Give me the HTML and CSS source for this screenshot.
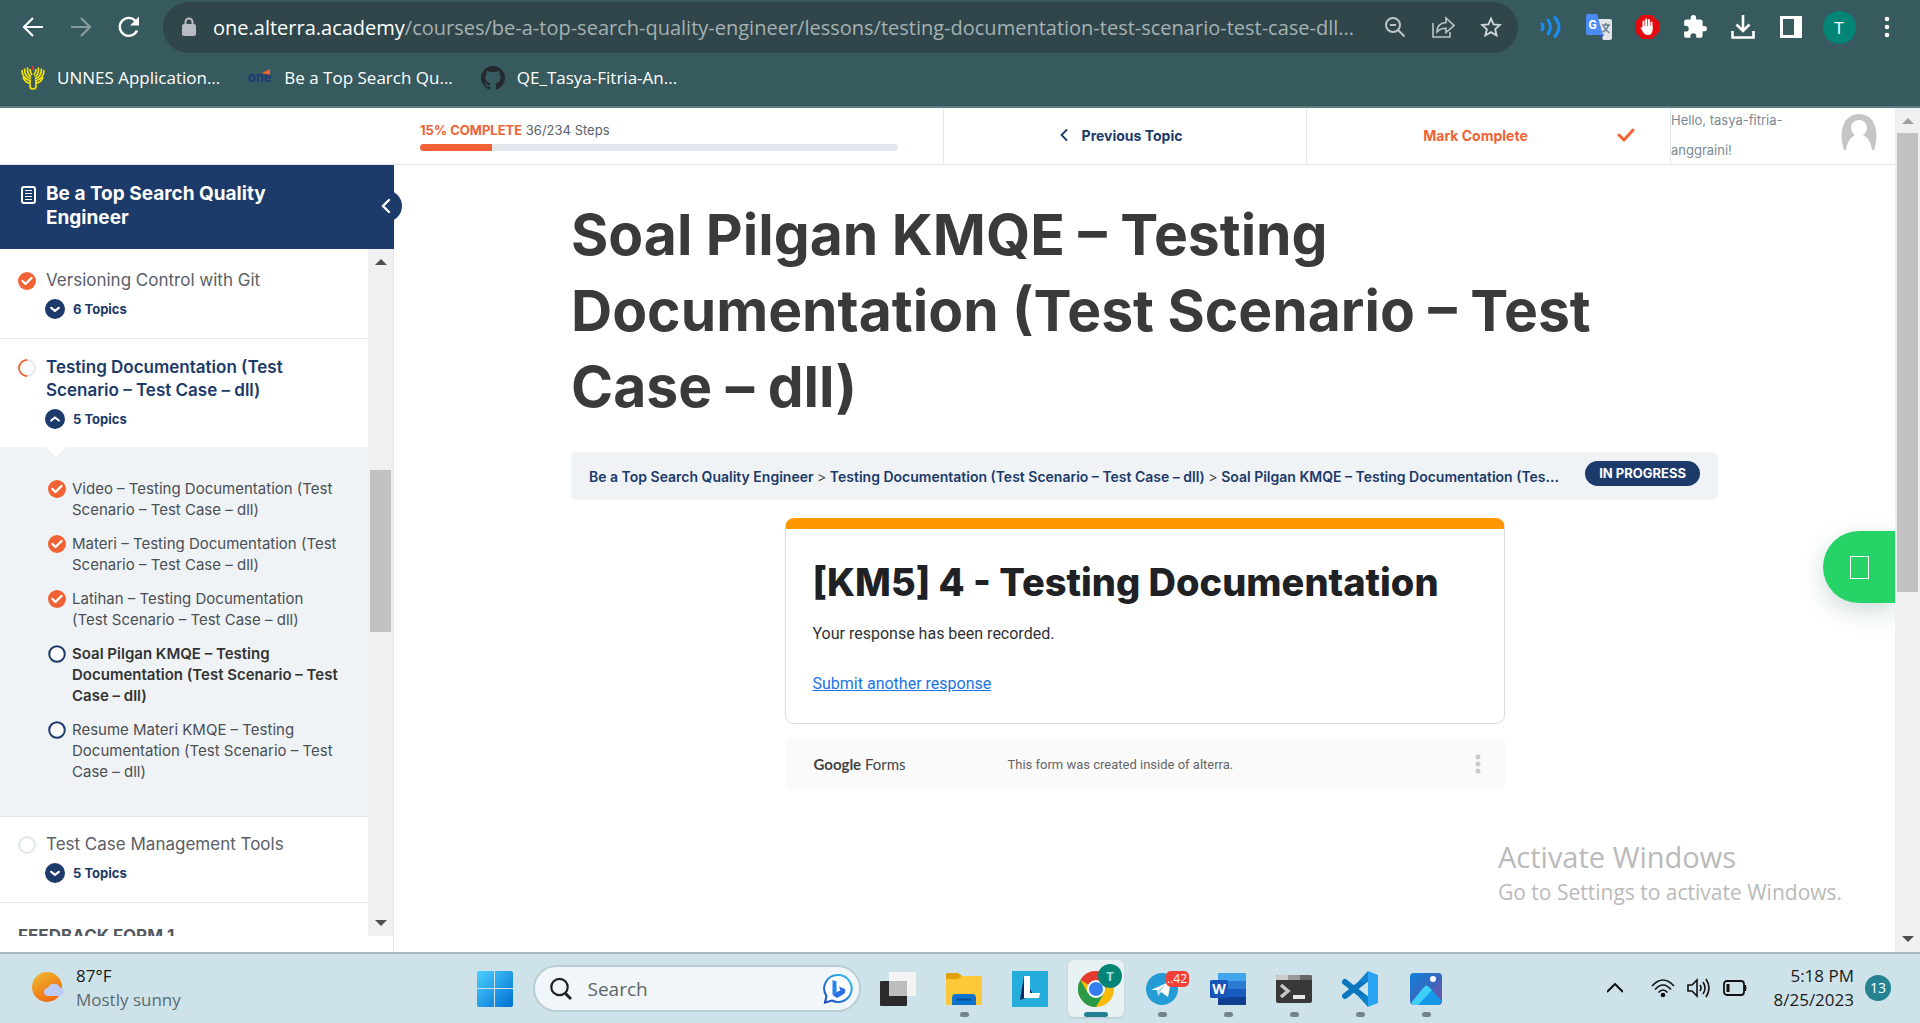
FILE: index.html
```html
<!DOCTYPE html>
<html lang="en">
<head>
<meta charset="utf-8">
<title>Soal Pilgan KMQE – Testing Documentation</title>
<link rel="stylesheet" href="styles.css">
</head>
<body>
<svg class="defs" aria-hidden="true">
  <symbol id="done" viewBox="0 0 18 18"><circle cx="9" cy="9" r="9" fill="#f16334"/><path d="M4.500 9l3 3 6-6" fill="none" stroke="#fff" stroke-width="2.400" stroke-linecap="round" stroke-linejoin="round"/></symbol>
  <symbol id="open" viewBox="0 0 18 18"><circle cx="9" cy="9" r="7.800" fill="#fff" stroke="#1c3a6a" stroke-width="2"/></symbol>
  <symbol id="down" viewBox="0 0 20 20"><circle cx="10" cy="10" r="10" fill="#1c3a6a"/><path d="M6.200 8.800l3.800 3 3.800-3" fill="none" stroke="#fff" stroke-width="2.200" stroke-linecap="round" stroke-linejoin="round"/></symbol>
  <symbol id="up" viewBox="0 0 20 20"><circle cx="10" cy="10" r="10" fill="#1c3a6a"/><path d="M6.200 11.500l3.800-3 3.800 3" fill="none" stroke="#fff" stroke-width="2.200" stroke-linecap="round" stroke-linejoin="round"/></symbol>
</svg>

<header class="browser">
  <div class="toolbar">
    <button class="tool" aria-label="Back"><svg width="24" height="24" viewBox="0 0 24 24" fill="none" stroke="#fff" stroke-width="2.200"><path d="M22 12H4M12 3l-9 9 9 9"/></svg></button>
    <button class="tool" aria-label="Forward"><svg width="24" height="24" viewBox="0 0 24 24" fill="none" stroke="#889c9e" stroke-width="2.200"><path d="M2 12h18M12 3l9 9-9 9"/></svg></button>
    <button class="tool" aria-label="Reload"><svg width="24" height="24" viewBox="0 0 24 24"><path d="M20 15.500A9 9 0 1 1 18.600 6" fill="none" stroke="#fff" stroke-width="2.400"/><path d="M22 1.500v9h-9z" fill="#fff"/></svg></button>
    <div class="omnibox">
      <svg class="lock" width="14" height="20" viewBox="0 0 14 20"><rect y="7" width="14" height="12" rx="2" fill="#b9bcc2"/><path d="M3.500 8V5a3.500 3.500 0 0 1 7 0v3" fill="none" stroke="#b9bcc2" stroke-width="2"/></svg>
      <div class="url"><b>one.alterra.academy</b>/courses/be-a-top-search-quality-engineer/lessons/testing-documentation-test-scenario-test-case-dll...</div>
      <button class="tool" aria-label="Zoom"><svg width="22" height="22" viewBox="0 0 22 22" fill="none" stroke="#bcc4c6" stroke-width="2"><circle cx="9" cy="9" r="7"/><path d="M14 14l6.500 6.500M6 9h6"/></svg></button>
      <button class="tool" aria-label="Share"><svg width="24" height="24" viewBox="0 0 24 24" fill="none" stroke="#bcc4c6" stroke-width="1.600"><path d="M2 8v14h17v-5M6 17c0-6 3-9 9-9.500V3l8 7.500-8 7v-4.200c-4 0-6.500 1-9 3.700z"/></svg></button>
      <button class="tool" aria-label="Bookmark"><svg width="22" height="22" viewBox="0 0 24 24" fill="none" stroke="#d0d6d7" stroke-width="2"><path d="M12 2.800l2.800 6.400 6.900.6-5.200 4.600 1.600 6.800L12 17.600l-6.100 3.600 1.600-6.800L2.300 9.800l6.900-.6z"/></svg></button>
    </div>
    <button class="tool" aria-label="Sound"><svg width="22" height="24" viewBox="0 0 22 24" fill="none" stroke="#1a8cf5" stroke-width="3" stroke-linecap="round"><path d="M2 9q2 3 0 6M8 5q5 7 0 14M15 2.500q8 9.500 0 19"/></svg></button>
    <button class="tool" aria-label="Translate"><svg width="26" height="26" viewBox="0 0 26 26"><path d="M10 5h14q2 0 2 2v17q0 2-2 2h-7z" fill="#e2e4e6"/><path d="M14 20h4l-3 6z" fill="#3650c0"/><path d="M2 0h9l6 21H2q-2 0-2-2V2q0-2 2-2z" fill="#4c8bf5"/><path d="M16 11h8M20 9v2M22.500 11q-1.500 5-6 7M17.500 12q1.500 4 6 7" fill="none" stroke="#66808c" stroke-width="1.500"/><text x="2.500" y="15" class="glyph-g">G</text></svg></button>
    <button class="tool" aria-label="Ad blocker"><svg width="24" height="24" viewBox="0 0 24 24"><path d="M7 0h10l7 7v10l-7 7H7l-7-7V7z" fill="#e4090c"/><path d="M8.500 13V6.500M11.200 12V4.500M13.900 12V5M16.500 14V7.500" stroke="#fff" stroke-width="2" stroke-linecap="round"/><path d="M7.500 11h10v4c0 3-2 5-4.500 5s-4-1-5-3l-2.500-4q1-1.500 2.500.5z" fill="#fff"/></svg></button>
    <button class="tool" aria-label="Extensions"><svg width="26" height="26" viewBox="0 0 24 24"><path fill="#fff" d="M20.500 11H19V7a2 2 0 0 0-2-2h-4V3.500a2.500 2.500 0 0 0-5 0V5H4a2 2 0 0 0-2 2v3.800h1.500a2.700 2.700 0 0 1 0 5.400H2V20a2 2 0 0 0 2 2h3.800v-1.500a2.700 2.700 0 0 1 5.400 0V22H17a2 2 0 0 0 2-2v-4h1.500a2.500 2.500 0 0 0 0-5z"/></svg></button>
    <button class="tool" aria-label="Downloads"><svg width="24" height="24" viewBox="0 0 24 24" fill="none" stroke="#fff" stroke-width="2.600"><path d="M12 0v15M5.500 9.500l6.500 6.500 6.500-6.500M1.500 16v6.500h21V16"/></svg></button>
    <button class="tool" aria-label="Side panel"><svg width="22" height="22" viewBox="0 0 22 22"><path fill="#fff" fill-rule="evenodd" d="M0 0h22v22H0zM3 3v16h11V3z"/></svg></button>
    <button class="tool" aria-label="Profile"><span class="profile">T</span></button>
    <button class="tool" aria-label="Menu"><svg width="6" height="22" viewBox="0 0 6 22" fill="#fff"><circle cx="3" cy="3" r="2.300"/><circle cx="3" cy="11" r="2.300"/><circle cx="3" cy="19" r="2.300"/></svg></button>
  </div>
  <nav class="bookmarks">
    <a href="#"><svg width="24" height="24" viewBox="0 0 24 24" fill="none" stroke="#f2e205" stroke-width="1.700"><path d="M10 15Q1 13 1 4M10 13Q3.500 11 3.500 2.500M10 11Q6 8 6.500 1.500M11 9Q9 6 9 3M14 15q9-2 9-11M14 13q6.500-2 6.500-10.500M14 11q4-3 3.500-9.500M13 9q2-3 2-6M2 11q2 6 7 6M22 11q-2 6-7 6"/><path d="M9 15v5q0 3 3 3t3-3v-5"/><path d="M12 0v4" stroke="#e33"/></svg>UNNES Application...</a>
    <a href="#"><svg width="24" height="24" viewBox="0 0 24 24"><text x="0" y="16" class="glyph-one">one</text><path d="M14 7l8-4v6z" fill="#f16334"/></svg>Be a Top Search Qu...</a>
    <a href="#"><svg width="24" height="24" viewBox="0 0 16 16"><path fill="#24292e" d="M8 0C3.580 0 0 3.580 0 8c0 3.540 2.290 6.530 5.470 7.590.4.070.55-.17.55-.38 0-.19-.01-.82-.01-1.490-2.010.37-2.530-.49-2.690-.94-.09-.23-.48-.94-.82-1.130-.28-.15-.68-.52-.01-.53.63-.01 1.080.58 1.230.82.72 1.210 1.870.87 2.330.66.07-.52.28-.87.51-1.070-1.780-.2-3.640-.89-3.640-3.950 0-.87.31-1.590.82-2.150-.08-.2-.36-1.020.08-2.120 0 0 .67-.21 2.200.82.64-.18 1.320-.27 2-.27s1.360.09 2 .27c1.530-1.040 2.200-.82 2.200-.82.44 1.100.16 1.920.08 2.120.51.56.82 1.270.82 2.150 0 3.070-1.870 3.750-3.650 3.950.29.25.54.73.54 1.480 0 1.070-.01 1.930-.01 2.200 0 .21.15.46.55.38A8.010 8.010 0 0 0 16 8c0-4.420-3.580-8-8-8z"/></svg>QE_Tasya-Fitria-An...</a>
  </nav>
</header>

<div class="page">
  <div class="site">
    <div class="topbar">
      <div class="progress">
        <div class="progress-text"><b>15% COMPLETE</b> 36/234 Steps</div>
        <div class="track"><div class="fill" style="width:15%"></div></div>
      </div>
      <a class="prev" href="#"><svg width="8" height="12" viewBox="0 0 8 12" fill="none" stroke="#1c3a6a" stroke-width="1.800" stroke-linecap="round"><path d="M6.500 1l-5 5 5 5"/></svg>Previous Topic</a>
      <button class="mark">Mark Complete<svg width="18" height="14" viewBox="0 0 18 14" fill="none" stroke="#f16334" stroke-width="3" stroke-linecap="round" stroke-linejoin="round"><path d="M2 7l5 5 9-10"/></svg></button>
      <div class="user"><span>Hello, tasya-fitria-<br>anggraini!</span>
        <svg width="36" height="36" viewBox="0 0 36 36"><path d="M3 36C-3 18 2 0 18 0s21 18 15 36z" fill="#c5c5c5"/><circle cx="18" cy="14" r="8" fill="#fff"/><path d="M5 36c1-8 5-14 10-15h6c5 1 9 7 10 15z" fill="#fff"/></svg>
      </div>
    </div>
    <div class="columns">
      <aside class="sidebar">
        <div class="course">
          <svg width="15" height="18" viewBox="0 0 15 18" fill="none" stroke="#fff"><rect x="1" y="1" width="13" height="16" rx="2" stroke-width="2"/><path d="M4 4.500h7M4 7.500h7M4 10.500h7M4 13.500h7"/></svg>
          <h2>Be a Top Search Quality<br>Engineer</h2>
          <button class="collapse" aria-label="Collapse sidebar"><svg width="10" height="16" viewBox="0 0 10 16" fill="none" stroke="#fff" stroke-width="2.400" stroke-linecap="round"><path d="M8 2L2 8l6 6"/></svg></button>
        </div>
        <div class="outline">
          <div class="lessons">
            <section class="lesson">
              <svg class="status" width="18" height="18"><use href="#done"/></svg>
              <div><a href="#">Versioning Control with Git</a><button class="topics"><svg width="20" height="20"><use href="#down"/></svg>6 Topics</button></div>
            </section>
            <section class="lesson current">
              <svg class="status" width="18" height="18" viewBox="0 0 18 18" fill="none" stroke-width="1.800"><circle cx="9" cy="9" r="8" stroke="#e2e7ed"/><path d="M9 1a8 8 0 0 0 0 16" stroke="#f16334"/></svg>
              <div><a href="#">Testing Documentation (Test<br>Scenario – Test Case – dll)</a><button class="topics"><svg width="20" height="20"><use href="#up"/></svg>5 Topics</button></div>
            </section>
            <ul class="subs">
              <li><svg width="18" height="18"><use href="#done"/></svg><a href="#">Video – Testing Documentation (Test<br>Scenario – Test Case – dll)</a></li>
              <li><svg width="18" height="18"><use href="#done"/></svg><a href="#">Materi – Testing Documentation (Test<br>Scenario – Test Case – dll)</a></li>
              <li><svg width="18" height="18"><use href="#done"/></svg><a href="#">Latihan – Testing Documentation<br>(Test Scenario – Test Case – dll)</a></li>
              <li class="here"><svg width="18" height="18"><use href="#open"/></svg><a href="#">Soal Pilgan KMQE – Testing<br>Documentation (Test Scenario – Test<br>Case – dll)</a></li>
              <li><svg width="18" height="18"><use href="#open"/></svg><a href="#">Resume Materi KMQE – Testing<br>Documentation (Test Scenario – Test<br>Case – dll)</a></li>
            </ul>
            <section class="lesson upcoming">
              <svg class="status" width="18" height="18" viewBox="0 0 18 18"><circle cx="9" cy="9" r="8" fill="#fff" stroke="#e2e7ed" stroke-width="2"/></svg>
              <div><a href="#">Test Case Management Tools</a><button class="topics"><svg width="20" height="20"><use href="#down"/></svg>5 Topics</button></div>
            </section>
            <h3 class="section-title">FEEDBACK FORM 1</h3>
          </div>
          <div class="scrollbar inner"><i class="arrow-up"></i><div class="rail"><div class="thumb"></div></div><i class="arrow-down"></i></div>
        </div>
      </aside>
      <main>
        <h1>Soal Pilgan KMQE – Testing<br>Documentation (Test Scenario – Test<br>Case – dll)</h1>
        <nav class="crumbs">
          <div class="trail"><a href="#">Be a Top Search Quality Engineer</a> <i>&gt;</i> <a href="#">Testing Documentation (Test Scenario – Test Case – dll)</a> <i>&gt;</i> <a href="#">Soal Pilgan KMQE – Testing Documentation (Tes...</a></div>
          <span class="badge">IN PROGRESS</span>
        </nav>
        <article class="form-card">
          <h2>[KM5] 4 - Testing Documentation</h2>
          <p>Your response has been recorded.</p>
          <a href="#">Submit another response</a>
        </article>
        <footer class="form-foot">
          <span class="gforms"><b>Google</b> Forms</span>
          <span class="made">This form was created inside of alterra.</span>
          <svg width="6" height="20" viewBox="0 0 6 20" fill="#ccc"><circle cx="3" cy="3" r="2.500"/><circle cx="3" cy="10" r="2.500"/><circle cx="3" cy="17" r="2.500"/></svg>
        </footer>
      </main>
    </div>
    <button class="whatsapp" aria-label="WhatsApp"><i></i></button>
    <div class="activate"><strong>Activate Windows</strong><span>Go to Settings to activate Windows.</span></div>
  </div>
  <div class="scrollbar outer"><i class="arrow-up"></i><div class="rail"><div class="thumb"></div></div><i class="arrow-down"></i></div>
</div>

<footer class="taskbar">
  <div class="weather">
    <svg width="34" height="32" viewBox="0 0 34 32"><defs><linearGradient id="sun" x1="0" y1="0" x2=".6" y2="1"><stop offset="0" stop-color="#ecbd35"/><stop offset="1" stop-color="#f26a0c"/></linearGradient></defs><circle cx="15" cy="15" r="15" fill="url(#sun)"/><path d="M16 24a4 4 0 0 1 0-8 6.500 6.500 0 0 1 12-.5 4.500 4.500 0 0 1 1 8.500z" fill="#bccbf5"/></svg>
    <div><span>87°F</span><span class="muted">Mostly sunny</span></div>
  </div>
  <div class="apps">
    <button class="app" aria-label="Start"><svg width="36" height="36" viewBox="0 0 36 36"><defs><linearGradient id="win" x1="0" y1="0" x2="1" y2="1"><stop offset="0" stop-color="#4cd0ff"/><stop offset="1" stop-color="#006fd0"/></linearGradient></defs><path fill="url(#win)" d="M2 0h15v17H0V2q0-2 2-2zM18 0h16q2 0 2 2v15H18zM0 18h17v18H2q-2 0-2-2zM18 18h18v16q0 2-2 2H18z"/></svg></button>
    <label class="search">
      <svg width="22" height="24" viewBox="0 0 22 24" fill="none" stroke="#222" stroke-width="2.200"><circle cx="9.500" cy="10" r="8.200"/><path d="M15 16l6 6" stroke-width="3"/></svg>
      <input type="text" placeholder="Search" aria-label="Search">
      <svg width="30" height="32" viewBox="0 0 30 32"><defs><linearGradient id="bing" x1="1" y1="0" x2="0" y2="1"><stop offset="0" stop-color="#35c5f2"/><stop offset="1" stop-color="#1546c0"/></linearGradient></defs><path d="M15 2a13.500 13.500 0 1 1-6 25.500l-7 2 1.500-6.500A13.500 13.500 0 0 1 15 2z" fill="#fff" stroke="url(#bing)" stroke-width="2"/><path d="M9.500 7l4 1.500v10.500l-4 3z" fill="#1f86ee"/><path d="M9.500 22l4-3 4-1.500-1.500-4 6 2.500q1 4-2 5.500l-6 3.500z" fill="#2a6fe6"/></svg>
    </label>
    <button class="app" aria-label="Task view"><svg width="36" height="34" viewBox="0 0 36 34"><rect y="9" width="27" height="25" rx="1" fill="#2b2b2b"/><rect x="9" width="27" height="24" rx="1" fill="#f4f4f4"/><path d="M9 9h18v15H9z" fill="#bdbdbd"/></svg></button>
    <button class="app" aria-label="File Explorer"><svg width="36" height="34" viewBox="0 0 36 34"><path d="M1 1h11l4 3-3 4H0V2z" fill="#e0a008"/><path d="M0 7h12l4-3h20v29H0z" fill="#fdc93a"/><path d="M6 33v-7q0-4 4-4h16q4 0 4 4v7z" fill="#0b73cc"/><path d="M11 27.500h14" stroke="#064f94" stroke-width="2"/></svg><i class="dot"></i></button>
    <button class="app" aria-label="L"><svg width="36" height="36" viewBox="0 0 36 36"><path d="M0 0h36v36H0z" fill="#25aedb"/><path d="M12 5L8 29l8-3 6 0z" fill="#0b2a5c"/><path d="M12 5h6v17h10l-1 5H12z" fill="#fff"/></svg></button>
    <button class="app active" aria-label="Chrome"><svg width="46" height="46" viewBox="0 0 46 46"><circle cx="18" cy="28" r="18" fill="#f9bb07"/><path d="M18 28L2.400 19a18 18 0 0 1 31.200 0z" fill="#e33b2e"/><path d="M2.400 19A18 18 0 0 0 18 46l7.800-13.500L18 28 10.200 32.500z" fill="#2a9a48"/><circle cx="18" cy="28" r="9" fill="#fff"/><circle cx="18" cy="28" r="7" fill="#347ef0"/><circle cx="32" cy="15" r="12" fill="#028577"/><text x="32" y="20" class="glyph-t">T</text></svg><i class="dot"></i></button>
    <button class="app" aria-label="Telegram"><svg width="32" height="32" viewBox="0 0 32 32"><circle cx="16" cy="16" r="16" fill="#259bd6"/><path d="M5 17L25 8l-3 16-7-5-3 4-1-6z" fill="#fff"/><path d="M12 17l8-6-6 8-2 4z" fill="#b7d8ea"/></svg><span class="count">..42</span><i class="dot"></i></button>
    <button class="app" aria-label="Word"><svg width="36" height="34" viewBox="0 0 36 34"><path d="M8 1h28v8H8z" fill="#41a5ee"/><path d="M8 9h28v8H8z" fill="#2b7cd3"/><path d="M8 17h28v8H8z" fill="#185abd"/><path d="M8 25h28v8H8z" fill="#103f91"/><rect y="8" width="18" height="18" rx="1.500" fill="#1955b8"/><text x="9" y="22" class="glyph-w">W</text></svg><i class="dot"></i></button>
    <button class="app" aria-label="Terminal"><svg width="36" height="28" viewBox="0 0 36 28"><rect width="36" height="28" rx="2" fill="#383838"/><path d="M0 5V2q0-2 2-2h10v5z" fill="#ccc"/><path d="M12 0h12v5H12z" fill="#999"/><path d="M24 0h10q2 0 2 2v3H24z" fill="#666"/><path d="M5 10l7 6-7 6" fill="none" stroke="#c8c8c8" stroke-width="3.500"/><path d="M17 20h12v4H17z" fill="#e8e8e8"/></svg><i class="dot"></i></button>
    <button class="app" aria-label="Visual Studio Code"><svg width="36" height="36" viewBox="0 0 36 36"><path d="M3 11l24 19M3 25L27 6" stroke="#0a76be" stroke-width="6" stroke-linecap="round"/><path d="M26 0l10 4v28l-10 4z" fill="#28a4f2"/><path d="M26 0L16 11l10 0M26 36L16 25l10 0" fill="#0f82cc"/></svg><i class="dot"></i></button>
    <button class="app" aria-label="Photos"><svg width="32" height="32" viewBox="0 0 32 32"><defs><linearGradient id="ph" x1="0" y1="0" x2="1" y2="1"><stop offset="0" stop-color="#0f80dd"/><stop offset=".5" stop-color="#3868bd"/><stop offset="1" stop-color="#8152a5"/></linearGradient></defs><rect width="32" height="32" rx="4" fill="url(#ph)"/><path d="M1 30L14 14q2.500-3 5 0l12 13v1q0 4-4 4H4q-2 0-3-2z" fill="#1698e8"/><path d="M1 30L14 14q2.500-3 5 0l3 3L8 32H4q-2 0-3-2z" fill="#3ed0fa"/><circle cx="23" cy="6" r="3" fill="#fff"/></svg><i class="dot"></i></button>
  </div>
  <div class="tray">
    <svg width="16" height="10" viewBox="0 0 16 10" fill="none" stroke="#111" stroke-width="2"><path d="M0 9l8-8 8 8"/></svg>
    <div class="tray-icons">
      <svg width="24" height="20" viewBox="0 0 24 20" fill="none" stroke="#111" stroke-width="1.600"><path d="M1 8q11-12 22 0M4 11.500q8-9 16 0M7.500 14.500q4.500-5 9 0"/><circle cx="12" cy="17" r="1.500" fill="#111"/></svg>
      <svg width="24" height="20" viewBox="0 0 24 20" fill="none" stroke="#111" stroke-width="1.600"><path d="M1 7v6h4l5 5V2L5 7zM13 7q2 3 0 6M16 4q4 6 0 12M19 1q6 9 0 18"/></svg>
      <svg width="24" height="16" viewBox="0 0 24 16"><rect x="1" y="1" width="20" height="14" rx="3" fill="none" stroke="#111" stroke-width="1.800"/><path d="M3.500 4h3v8h-3zM21 5h2q1 3 0 6h-2z" fill="#111"/></svg>
    </div>
    <div class="clock"><span>5:18 PM</span><span>8/25/2023</span></div>
    <span class="notif">13</span>
  </div>
</footer>
</body>
</html>
```
FILE: styles.css
```css
* { box-sizing: border-box; }
body { margin: 0; height: 100vh; display: flex; flex-direction: column; overflow: hidden; background: #fff; font-family: Inter, "Noto Sans", sans-serif; color: #3c3c3c; }
button { border: 0; padding: 0; background: none; font: inherit; color: inherit; }
a { color: inherit; text-decoration: none; }
h1, h2, h3, p, ul { margin: 0; padding: 0; }
svg { flex: none; display: block; }
.defs { position: absolute; width: 0; height: 0; }

/* browser chrome */
.browser { flex: none; height: 108px; background: #375a5e; border-bottom: 2px solid #5d7f82; font-family: "Open Sans", "Noto Sans", sans-serif; }
.toolbar { display: flex; align-items: center; padding: 1px 9px 0; }
.tool { width: 48px; height: 52px; display: flex; align-items: center; justify-content: center; }
.omnibox { flex: 1; min-width: 0; height: 51px; margin: 0 9px 0 10px; border-radius: 26px; background: #30464a; display: flex; align-items: center; padding: 0 3px 0 19px; }
.url { flex: 1; min-width: 0; margin-left: 17px; font-size: 20px; color: #a5b1b3; white-space: nowrap; overflow: hidden; }
.url b { font-weight: 400; color: #fff; }
.profile { width: 33px; height: 33px; border-radius: 50%; background: #028577; color: #fff; font-size: 17px; line-height: 33px; }
.glyph-g { font: bold 12px Roboto, sans-serif; fill: #fff; }
.glyph-one { font: bold 13px Inter, sans-serif; fill: #1c3a7a; }
.bookmarks { display: flex; gap: 28px; padding: 13px 21px 0; color: #fff; font-size: 17px; line-height: 24px; }
.bookmarks a { display: flex; align-items: center; gap: 12px; white-space: nowrap; }

/* page */
.page { flex: 1; min-height: 0; display: flex; }
.site { flex: 1; min-width: 0; position: relative; display: flex; flex-direction: column; }
.topbar { flex: none; height: 57px; border-bottom: 1px solid #e2e7ed; display: flex; padding-left: 394px; }
.progress { flex: 1; padding: 12px 45px 0 26px; font-size: 13px; color: #5a5f69; }
.progress-text { line-height: 20px; margin-bottom: 4px; }
.progress b { color: #f16334; font-weight: 700; }
.track { height: 7px; border-radius: 4px; background: #e2e7ed; overflow: hidden; }
.fill { height: 7px; background: #f16334; }
.prev, .mark { border-left: 1px solid #e2e7ed; padding-bottom: 2px; font-size: 14px; font-weight: 700; display: flex; align-items: center; justify-content: center; }
.prev { width: 363px; gap: 14px; color: #1c3a6a; padding-right: 8px; }
.mark { width: 364px; color: #f16334; display: grid; grid-template-columns: 1fr auto 1fr; padding-right: 26px; }
.mark::before { content: ""; }
.mark svg { justify-self: end; margin-right: 9px; }
.user { width: 225px; border-left: 1px solid #e2e7ed; display: flex; justify-content: space-between; padding: 0 18px 0 0; font-size: 13px; line-height: 30px; color: #7b8a93; }
.user span { margin-top: -3px; white-space: nowrap; }
.user svg { margin-top: 6px; }
.columns { flex: 1; min-height: 0; display: flex; }

/* sidebar */
.sidebar { width: 394px; flex: none; display: flex; flex-direction: column; border-right: 1px solid #e2e7ed; padding-bottom: 16px; }
.course { flex: none; position: relative; width: 394px; height: 84px; background: #1c3a6a; color: #fff; display: flex; gap: 10px; padding: 17px 21px; }
.course h2 { font-size: 19px; line-height: 24px; font-weight: 700; white-space: nowrap; }
.course > svg { margin-top: 4px; }
.collapse { position: absolute; right: -8px; top: 25px; width: 32px; height: 32px; border-radius: 50%; background: #1c3a6a; display: flex; align-items: center; justify-content: center; }
.outline { flex: 1; min-height: 0; display: flex; }
.lessons { flex: 1; overflow: hidden; }
.lesson { display: flex; gap: 10px; padding: 20px 18px 19px; border-bottom: 1px solid #e2e7ed; font-size: 17px; line-height: 23px; color: #5a6066; }
.lesson a { display: block; white-space: nowrap; }
.status { margin-top: 3px; }
.current { position: relative; border-bottom: 0; padding-top: 17px; padding-bottom: 18px; font-weight: 600; }
.current a { color: #1c3a6a; }
.current::after { content: ""; position: absolute; left: 46px; top: 100%; border: 10px solid transparent; border-top-color: #fff; border-bottom: 0; }
.upcoming { padding-top: 16px; }
.topics { display: flex; align-items: center; gap: 8px; margin: 7px 0 0 -1px; font-size: 13px; line-height: 20px; font-weight: 700; color: #1c3a6a; }
.subs { list-style: none; background: #eff3f6; border-bottom: 1px solid #e2e7ed; padding: 31px 0 34px 48px; font-size: 15px; line-height: 21px; }
.subs li { display: flex; gap: 6px; margin-bottom: 13px; white-space: nowrap; color: #4a4f55; }
.subs li:last-child { margin-bottom: 0; }
.subs svg { margin-top: 2px; }
.subs .here { font-weight: 600; color: #333; }
.section-title { padding: 21px 18px; font-size: 17px; line-height: 24px; font-weight: 700; color: #55585f; }

.scrollbar { flex: none; width: 25px; background: #f0f0f0; display: flex; flex-direction: column; align-items: center; padding: 10px 0; }
.rail { flex: 1; width: 21px; }
.thumb { background: #c1c1c1; }
.inner .rail { padding-top: 205px; }
.inner .thumb { height: 162px; }
.outer .rail { padding-top: 9px; }
.outer .thumb { height: 459px; }
.arrow-up, .arrow-down { border: 6px solid transparent; }
.arrow-up { border-top: 0; border-bottom-color: #505050; }
.arrow-down { border-bottom: 0; border-top-color: #505050; }
.outer .arrow-up { border-bottom-color: #a0a0a0; }

/* lesson content */
main { flex: 1; min-width: 0; padding: 32px 177px 0; }
h1 { font-size: 57px; line-height: 76px; font-weight: 700; color: #3a3a3a; white-space: nowrap; }
.crumbs { margin-top: 27px; height: 48px; border-radius: 6px; background: #eff3f6; display: flex; align-items: center; justify-content: space-between; padding: 0 18px; font-size: 14px; font-weight: 600; color: #1c3a6a; white-space: nowrap; }
.trail i { font-style: normal; font-weight: 400; color: #555; }
.badge { margin-bottom: 6px; height: 25px; line-height: 24px; padding: 0 14px; border-radius: 13px; background: #1c3a6a; color: #fff; font-size: 13px; font-weight: 700; }
.form-card { max-width: 720px; height: 206px; margin: 18px auto 0; border: 1px solid #dadce0; border-top: 11px solid #ff9800; border-radius: 9px; padding: 29px 27px 0; font-family: Roboto, sans-serif; font-size: 16px; line-height: 24px; color: #303134; }
.form-card h2 { font: 800 38px/48px Inter, sans-serif; color: #202124; white-space: nowrap; }
.form-card p { margin: 16px 0 26px; }
.form-card a { color: #1a73e8; text-decoration: underline; }
.form-foot { max-width: 720px; height: 54px; margin: 13px auto 0; border-radius: 0 0 8px 8px; background: #fafafa; display: flex; align-items: center; padding: 0 24px 0 29px; font-family: Roboto, sans-serif; font-size: 13px; color: #666; }
.gforms { width: 194px; font: 15px Lato, sans-serif; color: #444; }
.made { flex: 1; }
.whatsapp { position: absolute; right: 0; top: 423px; width: 72px; height: 72px; border-radius: 36px 0 0 36px; background: #25d366; box-shadow: 0 8px 25px rgba(0, 80, 70, .2); clip-path: inset(-40px 0 -40px -40px); display: flex; align-items: center; padding-left: 27px; }
.whatsapp i { width: 19px; height: 23px; border: 1px solid #fff; }
.activate { position: absolute; right: 54px; bottom: 44px; width: 343px; display: flex; flex-direction: column; color: #bababa; font-family: "Open Sans", sans-serif; font-size: 21px; line-height: 32px; white-space: nowrap; }
.activate strong { font-weight: 400; font-size: 29px; line-height: 38px; }

/* taskbar */
.taskbar { flex: none; height: 71px; border-top: 2px solid #a7b9bc; background: #cde3e9; display: grid; grid-template-columns: 1fr auto 1fr; align-items: center; font-family: "Open Sans", "Noto Sans", sans-serif; font-size: 17px; line-height: 24px; color: #1b1b1b; }
.taskbar span { display: block; }
.weather { display: flex; align-items: center; gap: 10px; padding: 0 0 2px 32px; }
.muted { color: #5c6b70; }
.apps { display: flex; align-items: center; }
.app { position: relative; width: 66px; height: 57px; display: flex; align-items: center; justify-content: center; }
.app svg { position: relative; }
.search { width: 328px; height: 47px; margin: 0 4px 0 5px; border: 2px solid #b9ced3; border-radius: 24px; background: #f0f6f9; display: flex; align-items: center; gap: 16px; padding: 0 6px 0 15px; }
.search input { flex: 1; min-width: 0; border: 0; padding: 0; background: none; outline: 0; font: 19px "Open Sans", sans-serif; }
.search input::placeholder { color: #5e6568; opacity: 1; }
.dot { position: absolute; bottom: 0; left: 29px; width: 9px; height: 5px; border-radius: 3px; background: #74858a; }
.active::before { content: ""; position: absolute; inset: 0 5px; border-radius: 6px; background: #e8f2f5; box-shadow: 0 1px 2px #b5c8cc; }
.active svg { left: 5px; top: -5px; }
.active .dot { left: 21px; width: 24px; background: #258292; }
.count { position: absolute; left: 37px; top: 11px; width: 23px; height: 16px; border-radius: 5px; background: #f5403a; color: #fff; font-size: 12px; line-height: 16px; }
.glyph-t { font: bold 13px "Open Sans", sans-serif; fill: #b5dcd6; text-anchor: middle; }
.glyph-w { font: bold 14px "Open Sans", sans-serif; fill: #fff; text-anchor: middle; }
.tray { display: flex; align-items: center; justify-content: flex-end; padding: 0 29px 2px 0; }
.tray-icons { display: flex; align-items: center; gap: 12px; margin: 0 25px 0 28px; }
.clock { width: 82px; display: flex; flex-direction: column; align-items: flex-end; white-space: nowrap; }
.notif { margin-left: 11px; width: 26px; height: 26px; border-radius: 50%; background: #258292; color: #fff; font-size: 14px; line-height: 25px; text-align: center; }
```
